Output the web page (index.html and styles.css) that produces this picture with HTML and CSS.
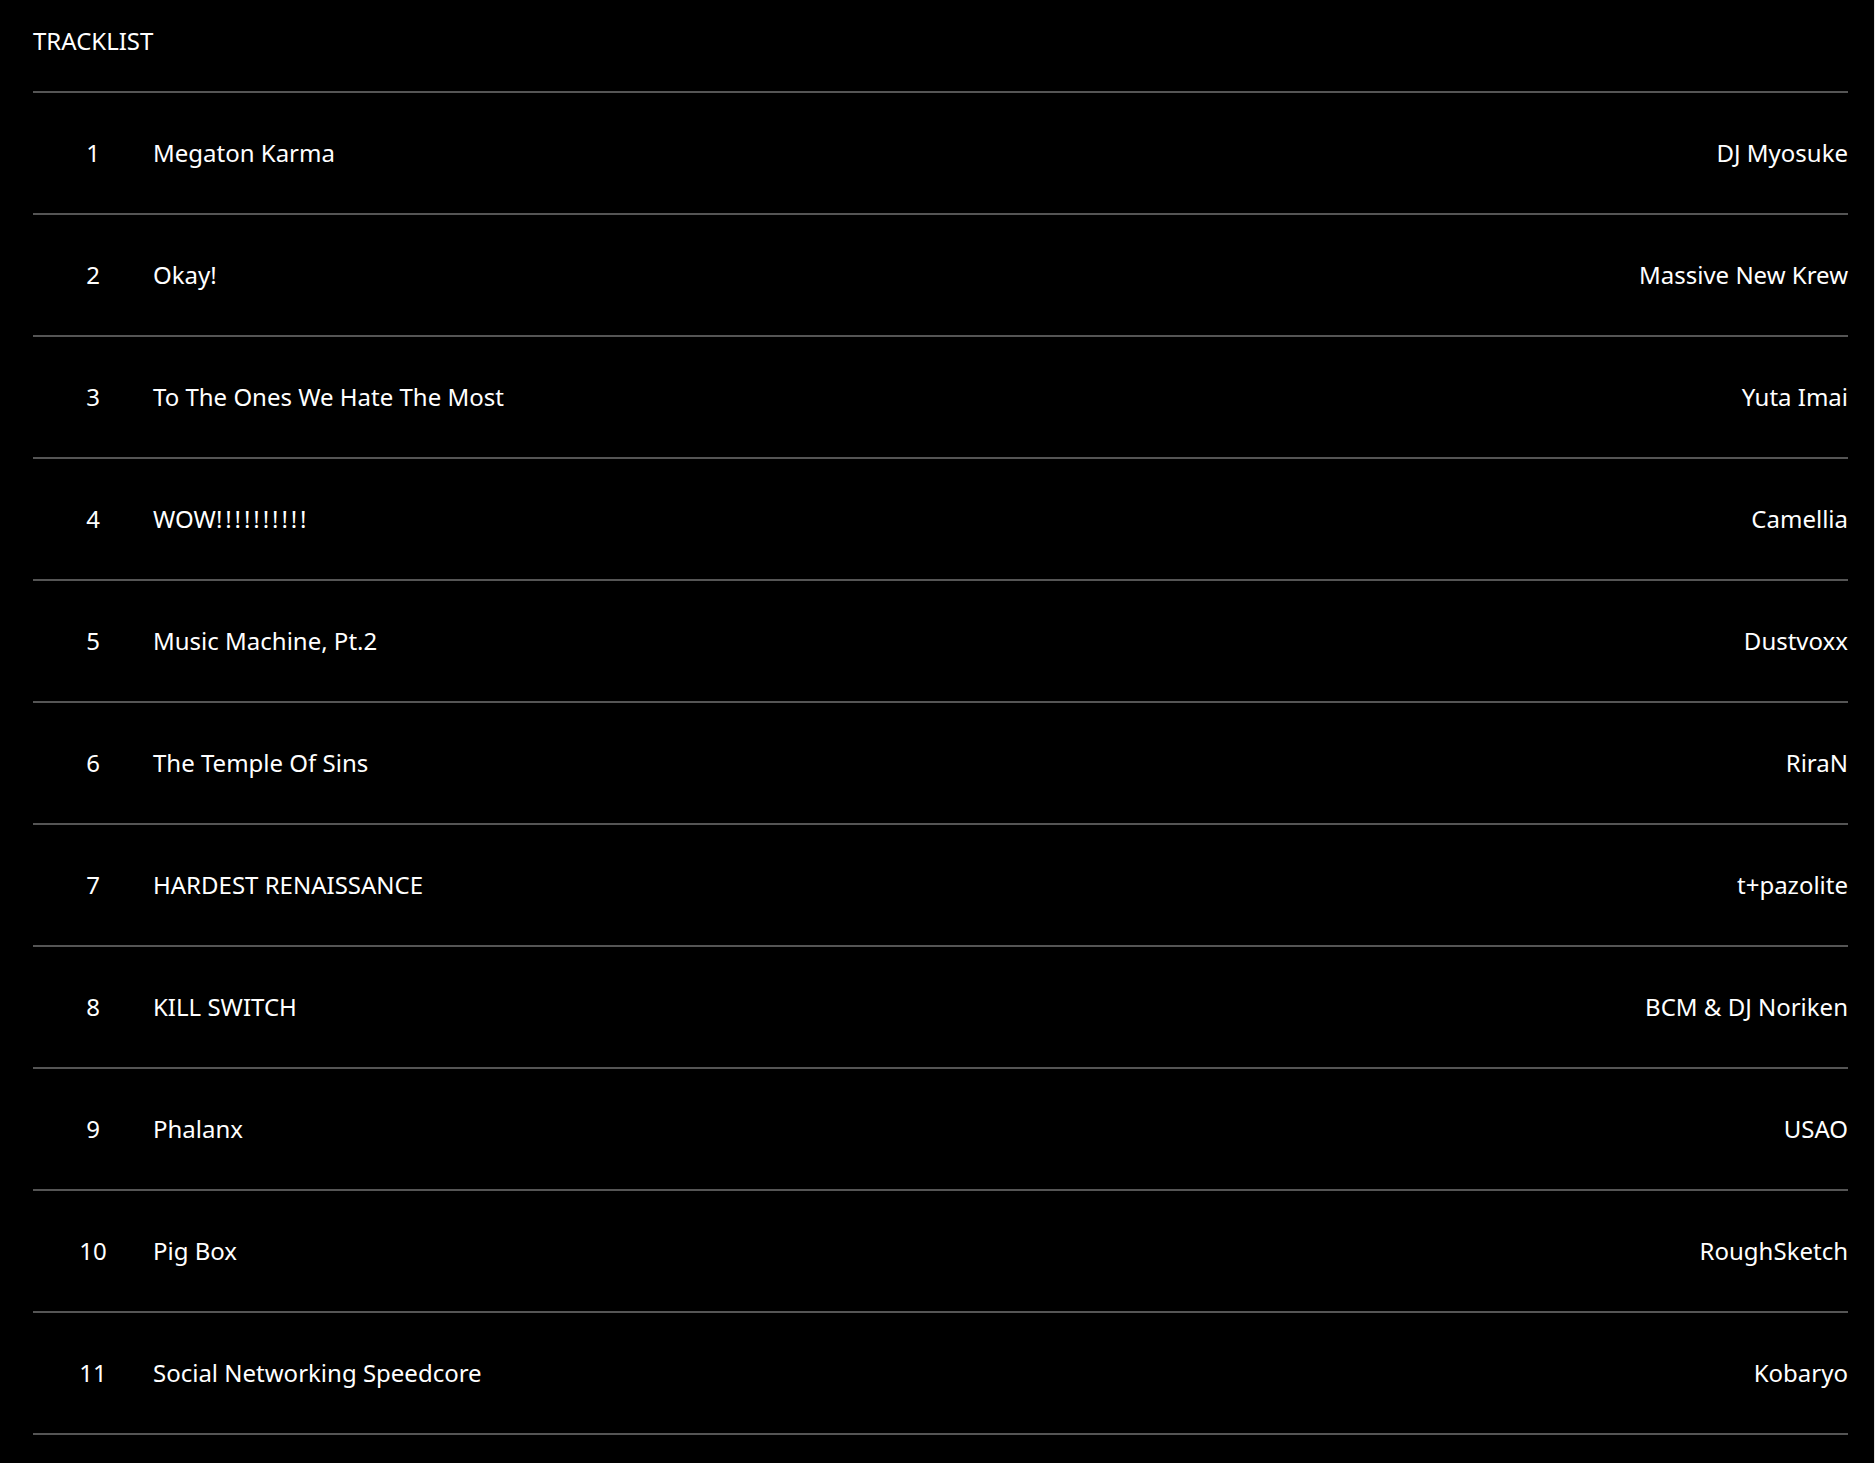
FILE: index.html
```html
<!DOCTYPE html>
<html lang="en">

<head>
    <meta charset="UTF-8">
    <meta name="viewport" content="width=device-width, initial-scale=1.0">
    <title>Tracklist</title>
    <link rel="stylesheet" href="styles.css">
</head>

<body>
    <div class="page">
        <h2 class="title">TRACKLIST</h2>

        <ol class="tracklist">
            <li class="track"><span class="num">1</span><span class="name">Megaton Karma</span><span class="artist">DJ Myosuke</span></li>
            <li class="track"><span class="num">2</span><span class="name">Okay!</span><span class="artist">Massive New Krew</span></li>
            <li class="track"><span class="num">3</span><span class="name">To The Ones We Hate The Most</span><span class="artist">Yuta Imai</span></li>
            <li class="track"><span class="num">4</span><span class="name">WOW<span class="bangs">!!!!!!!!!!</span></span><span class="artist">Camellia</span></li>
            <li class="track"><span class="num">5</span><span class="name">Music Machine, Pt.2</span><span class="artist">Dustvoxx</span></li>
            <li class="track"><span class="num">6</span><span class="name">The Temple Of Sins</span><span class="artist">RiraN</span></li>
            <li class="track"><span class="num">7</span><span class="name">HARDEST RENAISSANCE</span><span class="artist">t+pazolite</span></li>
            <li class="track"><span class="num">8</span><span class="name">KILL SWITCH</span><span class="artist">BCM &amp; DJ Noriken</span></li>
            <li class="track"><span class="num">9</span><span class="name">Phalanx</span><span class="artist">USAO</span></li>
            <li class="track"><span class="num">10</span><span class="name">Pig Box</span><span class="artist">RoughSketch</span></li>
            <li class="track"><span class="num">11</span><span class="name">Social Networking Speedcore</span><span class="artist">Kobaryo</span></li>
        </ol>
    </div>
</body>

</html>
```

FILE: styles.css
```css
html {
    background-color: #000;
}

body {
    font-family: "Noto Sans", "Open Sans", sans-serif;
    color: #fff;
    margin: 0;
    padding: 0;
}

.page {
    min-height: 1463px;
    box-sizing: border-box;
    padding: 0 26px 0 33px;
    border-right: 1px solid #e6e6e6;
}

.title {
    margin: 0;
    padding: 24px 0 34px;
    font-size: 24px;
    font-weight: normal;
    line-height: 33px;
}

.tracklist {
    list-style: none;
    margin: 0;
    padding: 0;
    border-top: 2px solid #555;
}

.track {
    display: flex;
    align-items: center;
    height: 118px;
    padding-bottom: 2px;
    border-bottom: 2px solid #555;
    font-size: 24px;
    line-height: 33px;
}

.num {
    width: 120px;
    text-align: center;
    flex-shrink: 0;
}

.name {
    flex: 1;
}

.bangs {
    letter-spacing: 2.9px;
}

.artist {
    text-align: right;
}
```
